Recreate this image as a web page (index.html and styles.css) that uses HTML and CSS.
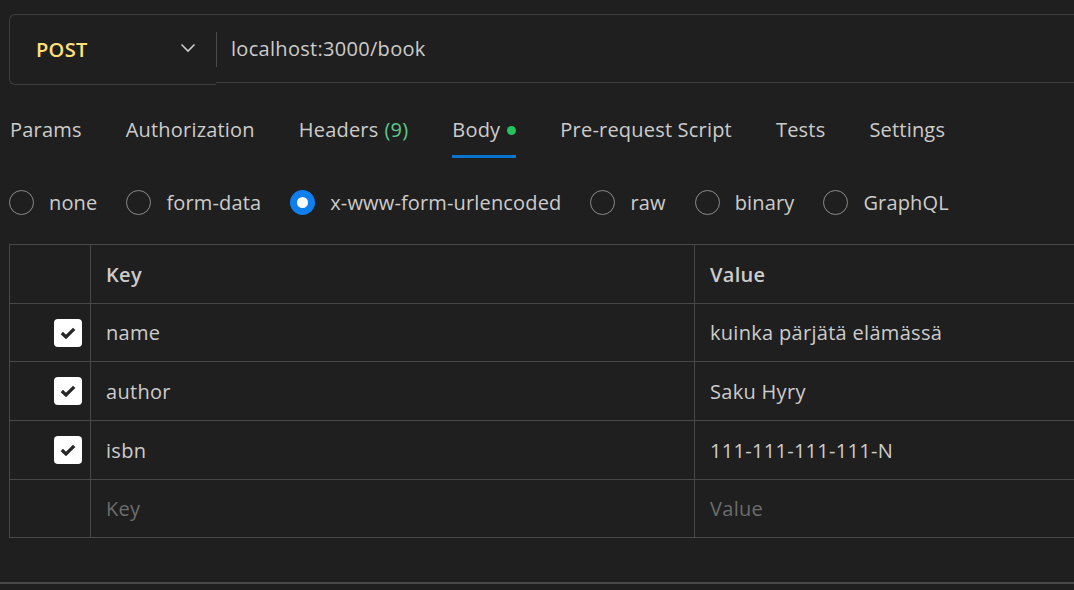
FILE: index.html
```html
<!DOCTYPE html>
<html>
<head>
<meta charset="utf-8">
<link rel="stylesheet" href="styles.css">
</head>
<body>
<div class="request">
  <div class="method">
    <span class="method-name">POST</span>
    <svg class="chevron" width="16" height="10" viewBox="0 0 16 10"><path d="M1.5 1.5 L8 8 L14.5 1.5" fill="none" stroke="#cccccc" stroke-width="1.6"/></svg>
  </div>
  <div class="url"><span class="url-text">localhost:3000/book</span></div>
</div>

<nav class="tabs">
  <span class="tab">Params</span>
  <span class="tab">Authorization</span>
  <span class="tab">Headers <span class="count">(9)</span></span>
  <span class="tab active">Body <span class="dot"></span></span>
  <span class="tab">Pre-request Script</span>
  <span class="tab">Tests</span>
  <span class="tab">Settings</span>
</nav>

<div class="radios">
  <label class="radio"><span class="circle"></span>none</label>
  <label class="radio"><span class="circle"></span>form-data</label>
  <label class="radio"><span class="circle checked"></span>x-www-form-urlencoded</label>
  <label class="radio"><span class="circle"></span>raw</label>
  <label class="radio"><span class="circle"></span>binary</label>
  <label class="radio"><span class="circle"></span>GraphQL</label>
</div>

<div class="table">
  <div class="row head">
    <div class="cell check"></div>
    <div class="cell key">Key</div>
    <div class="cell value">Value</div>
  </div>
  <div class="row short">
    <div class="cell check"><span class="box"><svg width="16" height="12" viewBox="0 0 16 12"><path d="M1.8 6 L6 10 L14.2 1.8" fill="none" stroke="#262626" stroke-width="3.2"/></svg></span></div>
    <div class="cell key">name</div>
    <div class="cell value">kuinka pärjätä elämässä</div>
  </div>
  <div class="row">
    <div class="cell check"><span class="box"><svg width="16" height="12" viewBox="0 0 16 12"><path d="M1.8 6 L6 10 L14.2 1.8" fill="none" stroke="#262626" stroke-width="3.2"/></svg></span></div>
    <div class="cell key">author</div>
    <div class="cell value">Saku Hyry</div>
  </div>
  <div class="row">
    <div class="cell check"><span class="box"><svg width="16" height="12" viewBox="0 0 16 12"><path d="M1.8 6 L6 10 L14.2 1.8" fill="none" stroke="#262626" stroke-width="3.2"/></svg></span></div>
    <div class="cell key">isbn</div>
    <div class="cell value">111-111-111-111-N</div>
  </div>
  <div class="row short">
    <div class="cell check"></div>
    <div class="cell key placeholder">Key</div>
    <div class="cell value placeholder">Value</div>
  </div>
</div>

<div class="footer-line"></div>
</body>
</html>
```
FILE: styles.css
```css
html, body {
  margin: 0;
  padding: 0;
  background: #1f1f1f;
  color: #cccccc;
  font-family: "Open Sans", "Noto Sans", sans-serif;
  font-size: 20px;
  letter-spacing: 0.3px;
  overflow: hidden;
  height: 590px;
}

.request {
  display: flex;
  align-items: flex-start;
  margin: 14px 0 0 9px;
  height: 71px;
}

.method {
  box-sizing: border-box;
  width: 207px;
  height: 71px;
  border: 1px solid #3e3e3e;
  border-right: none;
  border-radius: 6px 0 0 6px;
  display: flex;
  align-items: center;
  padding: 0 20px 0 26px;
  justify-content: space-between;
}

.method-name {
  color: #ffe07a;
  font-weight: 600;
}

.chevron {
  margin-top: -4px;
}

.url {
  flex: 1;
  box-sizing: border-box;
  height: 69px;
  border-top: 1px solid #3e3e3e;
  border-bottom: 1px solid #3e3e3e;
  display: flex;
  align-items: center;
  position: relative;
  padding-left: 15px;
}

.url::before {
  content: "";
  position: absolute;
  left: 0;
  top: 17px;
  width: 1px;
  height: 35px;
  background: #4a4a4a;
}

.tabs {
  display: flex;
  align-items: flex-end;
  margin: 16px 0 0 10px;
  height: 57px;
  letter-spacing: 0.2px;
}

.tab {
  display: flex;
  align-items: center;
  height: 54px;
  margin-right: 44px;
  box-sizing: border-box;
  border-bottom: 3px solid transparent;
  white-space: nowrap;
}

.tab.active {
  border-bottom-color: #0b74d1;
}

.count {
  color: #5cc98a;
  margin-left: 6px;
}

.dot {
  display: inline-block;
  width: 9px;
  height: 9px;
  border-radius: 50%;
  background: #22c35d;
  margin-left: 7px;
  margin-top: 2px;
}

.radios {
  display: flex;
  align-items: center;
  margin: 31px 0 0 9px;
  height: 27px;
  letter-spacing: 0.15px;
}

.radio {
  display: flex;
  align-items: center;
  margin-right: 29px;
  white-space: nowrap;
}

.circle {
  box-sizing: border-box;
  width: 25px;
  height: 25px;
  border: 1px solid #8a8a8a;
  border-radius: 50%;
  margin-right: 15px;
}

.circle.checked {
  border: 7.5px solid #0f7ff0;
  background: #ffffff;
}

.table {
  margin: 28px 0 0 9px;
  border-top: 1px solid #484848;
  border-left: 1px solid #484848;
}

.row {
  display: flex;
  box-sizing: border-box;
  height: 59px;
  border-bottom: 1px solid #484848;
}

.row.short {
  height: 58px;
}

.row.head {
  font-weight: 600;
}

.cell {
  display: flex;
  align-items: center;
  box-sizing: border-box;
}

.cell.check {
  width: 81px;
  border-right: 1px solid #484848;
  justify-content: flex-end;
  padding-right: 8px;
}

.cell.key {
  width: 604px;
  border-right: 1px solid #484848;
  padding-left: 15px;
}

.cell.value {
  flex: 1;
  padding-left: 15px;
}

.placeholder {
  color: #6c6c6c;
}

.box {
  width: 28px;
  height: 28px;
  border-radius: 4px;
  background: #ffffff;
  display: flex;
  align-items: center;
  justify-content: center;
}

.footer-line {
  margin-top: 44px;
  height: 2px;
  background: #484848;
}
```
